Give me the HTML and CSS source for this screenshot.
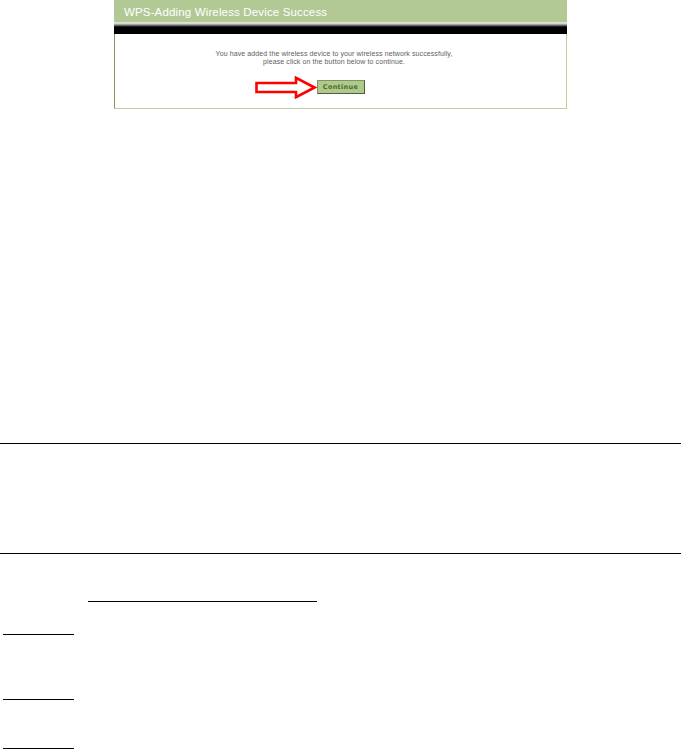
FILE: index.html
```html
<!DOCTYPE html>
<html lang="en">
<head>
  <meta charset="UTF-8">
  <title>WPS - Adding Wireless Device Success</title>
  <link rel="stylesheet" href="styles.css">
</head>
<body>

  <div class="panel">
    <div class="panel-title">WPS-Adding Wireless Device Success</div>
    <div class="panel-bar"></div>
    <div class="panel-body">
      <p class="msg">You have added the wireless device to your wireless network successfully,<br>please click on the button below to continue.</p>
      <div class="actions">
        <div class="btn-wrap">
          <!-- fleche rouge qui montre le bouton -->
          <svg class="pointer" width="62" height="23" viewBox="0 0 62 23">
            <polygon points="1.5,7 41,7 41,1.8 59.5,11.5 41,21.2 41,16 1.5,16" fill="#fff" stroke="#f00" stroke-width="2.6" stroke-linejoin="miter"/>
          </svg>
          <button class="continue-btn">Continue</button>
        </div>
      </div>
    </div>
  </div>

  <hr class="rule rule-top">
  <hr class="rule rule-bottom">

  <div class="blank blank-wide"></div>
  <div class="blank blank-short first"></div>
  <div class="blank blank-short second"></div>
  <div class="blank blank-short third"></div>

</body>
</html>
```

FILE: styles.css
```css
body {
  margin: 0;
  background-color: #ffffff;
  font-family: 'Liberation Sans', Arial, sans-serif;
}

.panel {
  width: 453px;
  margin-left: 114px;
}

.panel-title {
  height: 22px;
  line-height: 24px;
  background-color: #b2c996;
  color: #ffffff;
  font-size: 11.5px;
  letter-spacing: 0.15px;
  padding-left: 10px;
}

.panel-bar {
  height: 12px;
  background: linear-gradient(to bottom, #c9d6b8 0px, #eef0ea 1px, #bcbcbc 2px, #8a8a8a 3px, #3c3c3c 4px, #000000 5px, #000000 12px);
}

.panel-body {
  height: 75px;
  border-left: 1px solid #7f9c5a;
  border-right: 1px solid #b9d28e;
  border-bottom: 1px solid #c3caa8;
  box-sizing: border-box;
  padding-top: 16px;
}

.msg {
  margin: 0;
  padding-right: 13px;
  text-align: center;
  font-size: 7px;
  line-height: 8px;
  letter-spacing: 0.1px;
  color: #606060;
}

.actions {
  display: flex;
  justify-content: center;
  margin-top: 14px;
}

.btn-wrap {
  position: relative;
}

.pointer {
  position: absolute;
  right: 100%;
  top: -4px;
}

.continue-btn {
  display: block;
  width: 48px;
  height: 14px;
  padding: 0;
  background-color: #afc98c;
  border: 1px solid #7d9660;
  border-right-color: #4e5f3a;
  border-bottom-color: #4e5f3a;
  color: #4d6a2e;
  font-family: 'DejaVu Sans', Verdana, sans-serif;
  font-size: 6.5px;
  font-weight: bold;
  letter-spacing: 0.3px;
  cursor: pointer;
}

.rule {
  border: none;
  border-top: 1px solid #000000;
  margin: 0;
}

.rule-top {
  margin-top: 334px;
}

.rule-bottom {
  margin-top: 109px;
}

.blank {
  height: 0;
  border-top: 1px solid #000000;
}

.blank-wide {
  width: 229px;
  margin: 47px 0 0 88px;
}

.blank-short {
  width: 71px;
  margin-left: 3px;
}

.blank-short.first {
  margin-top: 32px;
}

.blank-short.second {
  margin-top: 64px;
}

.blank-short.third {
  margin-top: 48px;
}
```
